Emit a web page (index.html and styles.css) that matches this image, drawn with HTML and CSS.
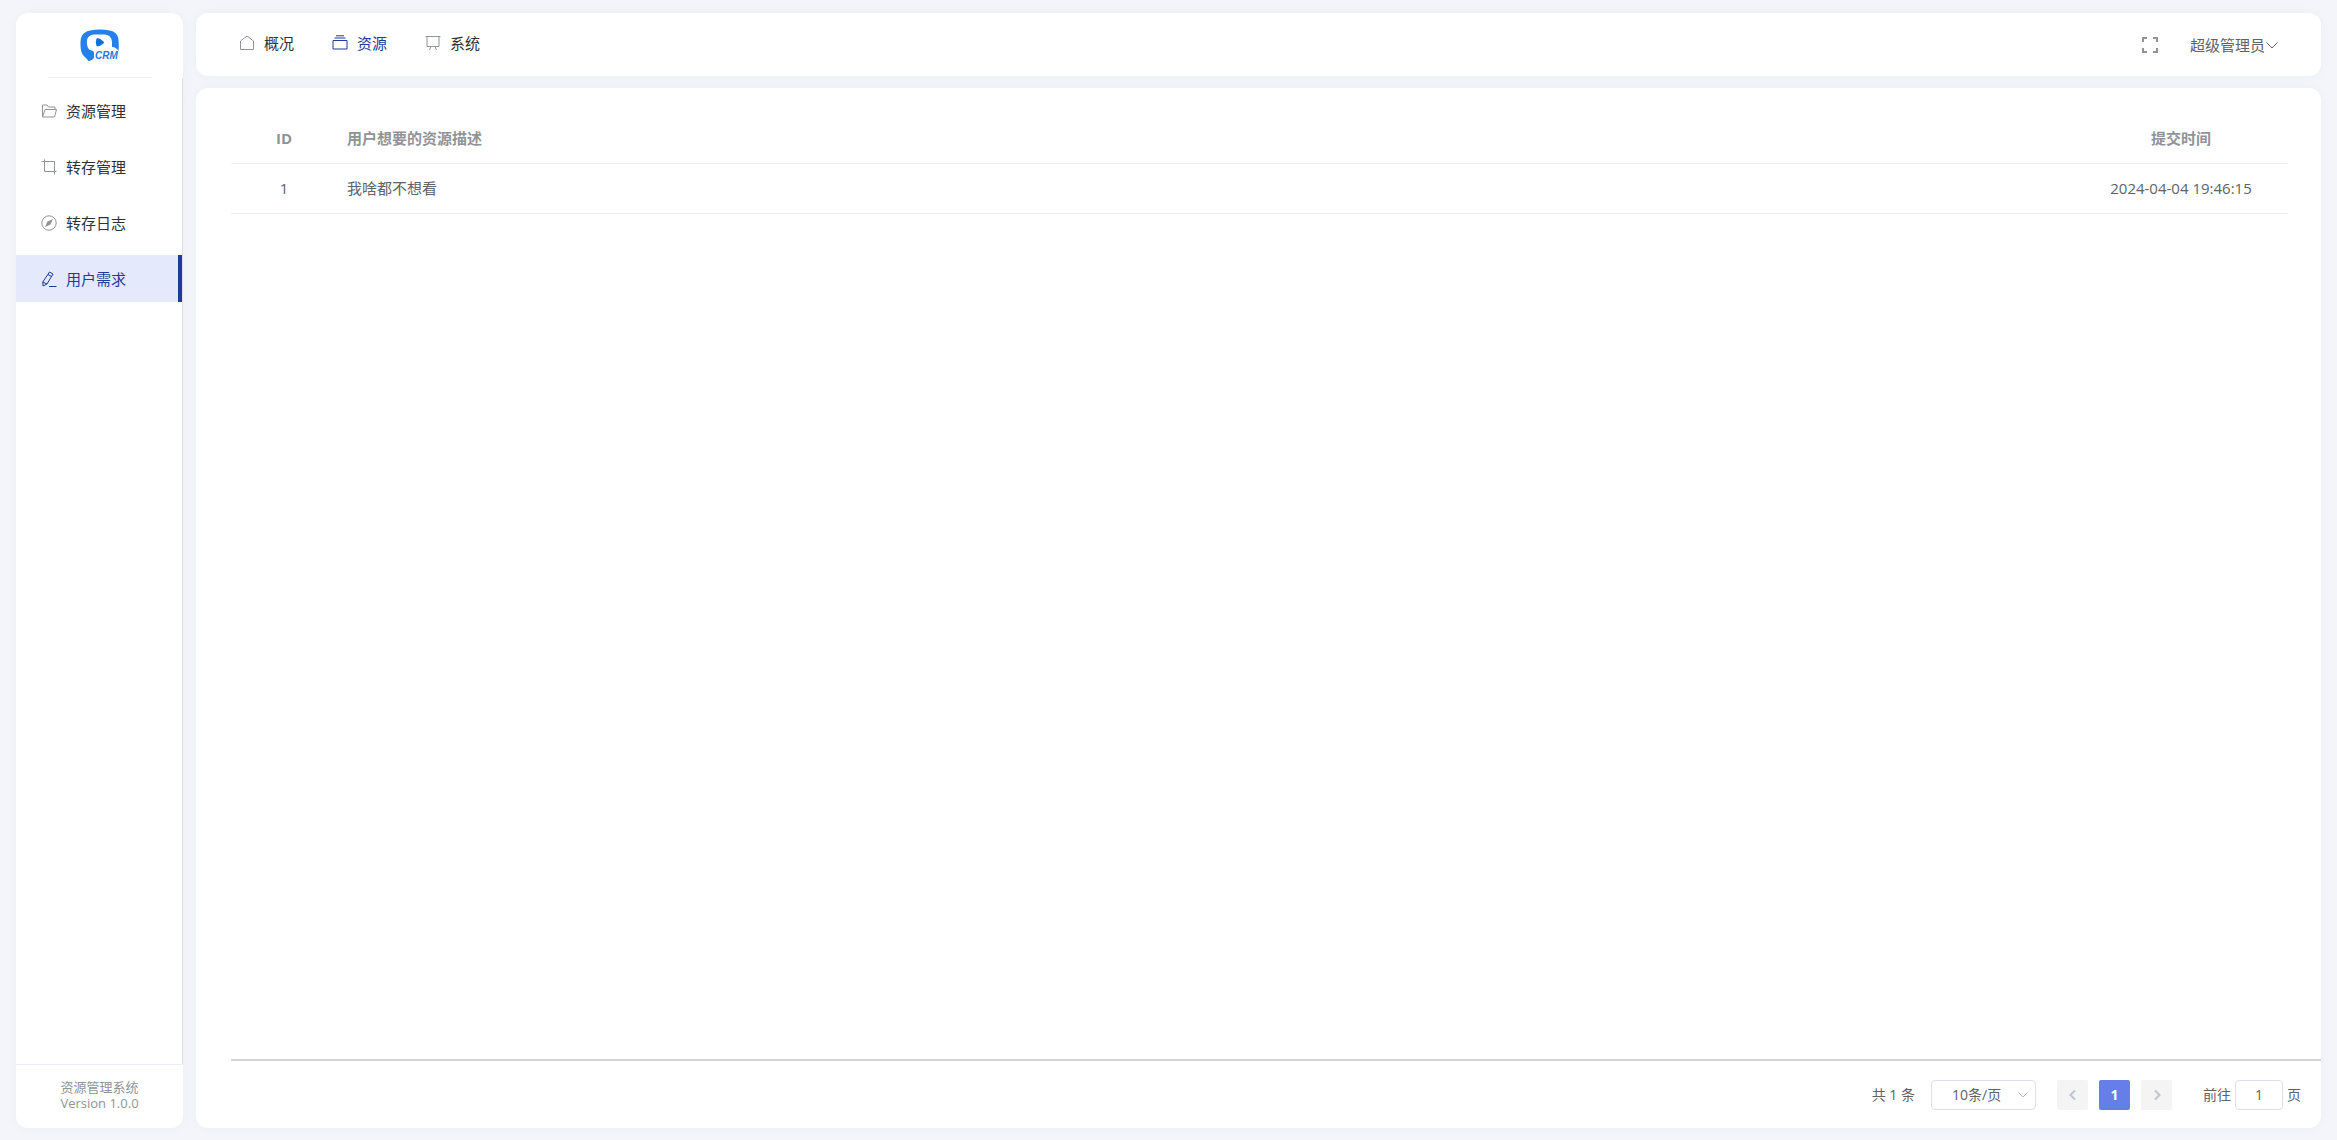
FILE: index.html
```
<!DOCTYPE html>
<html lang="zh-CN">
<head>
  <meta charset="UTF-8">
  <title>资源管理系统</title>
  <link rel="stylesheet" href="styles.css">
</head>
<body>
  <aside class="sidebar">
    <div class="logo">
      <svg width="40" height="34" viewBox="0 0 40 34" role="img" aria-label="CRM">
        <path fill="#2680eb" d="M10 1.5Q20 -.5 30 1.5Q37 3 38.300 9Q39.200 15 38.500 22Q36 18 32 18V13Q31.500 6 25 5.500H14Q8 6 7 11Q6.500 19 10 21Q14 21.500 14 24V29Q11 32.500 8.500 32L6 29Q1.500 26 .8 20Q0 14 1 9Q2.500 3 10 1.500Z"/>
        <path fill="#0f6fe0" d="M16.500 9.500Q19 8 23.500 12.500Q24.500 13.500 23.500 14.500Q19 18 16.500 17Q15 13 16.500 9.500Z"/>
        <text x="15" y="30" class="logo-text">CRM</text>
      </svg>
    </div>
    <nav class="side-menu">
      <a href="#" class="side-item">
        <svg class="icon" viewBox="0 0 16 16"><path d="M1.500 14H13.500L15.500 6.500H4L1.500 14ZM1.500 14V2H6L7.500 4H14V6.500"/></svg>
        <span>资源管理</span>
      </a>
      <a href="#" class="side-item">
        <svg class="icon" viewBox="0 0 16 16"><path d="M3.500 .5V12.500H15.500M.5 2.500H13.500V15.500"/></svg>
        <span>转存管理</span>
      </a>
      <a href="#" class="side-item">
        <svg class="icon" viewBox="0 0 16 16"><circle cx="8" cy="8" r="7.200"/><path class="fill" d="M12 4L9.500 9.500L4 12L6.500 6.500Z"/></svg>
        <span>转存日志</span>
      </a>
      <a href="#" class="side-item active">
        <svg class="icon" viewBox="0 0 16 16"><path d="M8.500 1L12 3L6 13L2 15L1.800 11ZM7 3.500L10.500 5.500M1.800 11L6 13M8 15.500H15.500"/></svg>
        <span>用户需求</span>
      </a>
    </nav>
    <footer class="side-footer">
      <div>资源管理系统</div>
      <div>Version 1.0.0</div>
    </footer>
  </aside>

  <div class="page">
    <header class="header">
      <nav class="top-menu">
        <a href="#" class="top-item">
          <svg class="icon" viewBox="0 0 16 16"><path d="M1.500 14.500V6L8 1L14.500 6V14.500Z"/></svg>
          <span>概况</span>
        </a>
        <a href="#" class="top-item active">
          <svg class="icon" viewBox="0 0 16 16"><path d="M1 5.500H15V14H1ZM2.500 3H13.500M4 .8H12"/></svg>
          <span>资源</span>
        </a>
        <a href="#" class="top-item">
          <svg class="icon" viewBox="0 0 16 16"><path d="M.5 1.500H15.500M2 1.500V11.500H14V1.500M6 11.500L4.500 15M10 11.500L11.500 15"/></svg>
          <span>系统</span>
        </a>
      </nav>
      <div class="header-right">
        <button type="button" class="plain-btn" aria-label="全屏">
          <svg class="icon fullscreen" viewBox="0 0 16 16"><path d="M1 5V1H5M11 1H15V5M15 11V15H11M5 15H1V11"/></svg>
        </button>
        <button type="button" class="plain-btn">
          <span>超级管理员</span>
          <svg class="arrow" viewBox="0 0 14 14"><path d="M1.500 4.500L7 10L12.500 4.500"/></svg>
        </button>
      </div>
    </header>

    <main class="content">
      <div class="table-wrap">
        <table>
          <thead>
            <tr>
              <th class="col-id">ID</th>
              <th class="col-desc">用户想要的资源描述</th>
              <th class="col-time">提交时间</th>
            </tr>
          </thead>
          <tbody>
            <tr>
              <td class="col-id">1</td>
              <td class="col-desc">我啥都不想看</td>
              <td class="col-time">2024-04-04 19:46:15</td>
            </tr>
          </tbody>
        </table>
      </div>

      <div class="pagination">
        <span class="total">共 1 条</span>
        <div class="size-select">
          <select aria-label="每页条数">
            <option>10条/页</option>
            <option>20条/页</option>
            <option>50条/页</option>
          </select>
          <svg class="arrow" viewBox="0 0 14 14"><path d="M2.500 4.500L7 9L11.500 4.500"/></svg>
        </div>
        <div class="pager">
          <button type="button" disabled aria-label="上一页"><svg viewBox="0 0 14 14"><path d="M9 2.500L4.500 7L9 11.500"/></svg></button>
          <button type="button" class="current">1</button>
          <button type="button" disabled aria-label="下一页"><svg viewBox="0 0 14 14"><path d="M5 2.500L9.500 7L5 11.500"/></svg></button>
        </div>
        <div class="jump">
          <label for="pageNo">前往</label>
          <input type="text" id="pageNo" value="1">
          <span>页</span>
        </div>
      </div>
    </main>
  </div>
</body>
</html>
```

FILE: styles.css
```
* {
  box-sizing: border-box;
}

body {
  margin: 0;
  height: 100vh;
  padding: 13px 16px 12px;
  display: flex;
  gap: 13px;
  background-color: #f4f5fa;
  font-family: "Open Sans", "Noto Sans CJK SC", sans-serif;
  font-size: 15px;
  line-height: 20px;
  color: #606266;
}

a {
  color: #303133;
  text-decoration: none;
}

button,
input,
select {
  font: inherit;
  color: inherit;
}

svg {
  fill: none;
  stroke: currentColor;
  flex-shrink: 0;
}

.icon {
  width: 16px;
  height: 16px;
  color: #909399;
}

.icon .fill {
  fill: currentColor;
  stroke: none;
}

.arrow {
  width: 14px;
  height: 14px;
}

.sidebar,
.header,
.content {
  background-color: #fff;
  border-radius: 12px;
  box-shadow: 0 0 12px rgba(0, 0, 0, 0.03);
}

/* sidebar */
.sidebar {
  width: 167px;
  flex-shrink: 0;
  display: flex;
  flex-direction: column;
}

.logo {
  height: 65px;
  margin: 0 32px;
  padding-top: 16px;
  text-align: center;
  border-bottom: 1px solid #f0f0f3;
}

.logo svg {
  stroke: none;
}

.logo-text {
  fill: #1f78e8;
  font-family: "Liberation Sans", sans-serif;
  font-size: 10px;
  font-weight: bold;
  font-style: italic;
}

.side-menu {
  flex: 1;
  display: flex;
  flex-direction: column;
  gap: 9px;
  padding-top: 9px;
  border-right: 1px solid #dcdfe6;
}

.side-item {
  height: 47px;
  display: flex;
  align-items: center;
  gap: 9px;
  padding-left: 25px;
}

.side-item.active {
  color: #1d3a9c;
  background-color: #e4eafb;
  border-right: 4px solid #1d3a9c;
}

.active .icon {
  color: #1d3a9c;
}

.side-footer {
  height: 64px;
  padding-top: 14px;
  border-top: 1px solid #ebeef2;
  font-size: 13px;
  line-height: 16px;
  text-align: center;
  color: #909399;
}

/* right part */
.page {
  flex: 1;
  min-width: 0;
  display: flex;
  flex-direction: column;
  gap: 12px;
}

.header {
  height: 63px;
  padding: 0 42px 0 43px;
  display: flex;
  justify-content: space-between;
}

.top-menu {
  display: flex;
  gap: 38px;
  height: 60px;
}

.top-item {
  display: flex;
  align-items: center;
  gap: 9px;
}

.top-item.active {
  color: #1d3a9c;
}

.header-right {
  display: flex;
  align-items: center;
  gap: 32px;
}

.plain-btn {
  display: flex;
  align-items: center;
  padding: 0;
  border: none;
  background: none;
  cursor: pointer;
}

.fullscreen {
  stroke-width: 2;
}

.content {
  flex: 1;
  display: flex;
  flex-direction: column;
}

.table-wrap {
  flex: 1;
  padding: 25px 33px 0 35px;
}

table {
  width: 100%;
  table-layout: fixed;
  border-collapse: collapse;
}

th,
td {
  height: 50px;
  padding: 0 10px;
  border-bottom: 1px solid #ebeef2;
  text-align: center;
}

th {
  color: #909399;
}

.col-id {
  width: 106px;
}

th.col-desc,
td.col-desc {
  text-align: left;
}

.col-time {
  width: 214px;
}

/* pagination */
.pagination {
  height: 69px;
  margin-left: 35px;
  padding-right: 20px;
  display: flex;
  align-items: center;
  justify-content: flex-end;
  border-top: 2px solid #d4d4d6;
  font-size: 14px;
}

.size-select {
  position: relative;
  margin-left: 16px;
}

.size-select select {
  appearance: none;
  display: block;
  width: 105px;
  height: 30px;
  padding: 0 20px;
  border: 1px solid #dcdfe6;
  border-radius: 4px;
  background-color: #fff;
}

.size-select .arrow {
  position: absolute;
  right: 6px;
  top: 8px;
  color: #b4b8c0;
  pointer-events: none;
}

.pager {
  display: flex;
  gap: 11px;
  margin: 0 31px 0 21px;
}

.pager button {
  width: 31px;
  height: 30px;
  padding: 0;
  display: flex;
  align-items: center;
  justify-content: center;
  border: none;
  border-radius: 2px;
  background-color: #f4f4f5;
  color: #c0c4cc;
}

.pager svg {
  width: 14px;
  height: 14px;
  stroke-width: 2;
}

.pager .current {
  background-color: #667fe8;
  color: #fff;
  font-weight: bold;
}

.jump {
  display: flex;
  align-items: center;
  gap: 4px;
}

.jump input {
  width: 48px;
  height: 30px;
  padding: 0;
  border: 1px solid #dcdfe6;
  border-radius: 4px;
  text-align: center;
}
```
